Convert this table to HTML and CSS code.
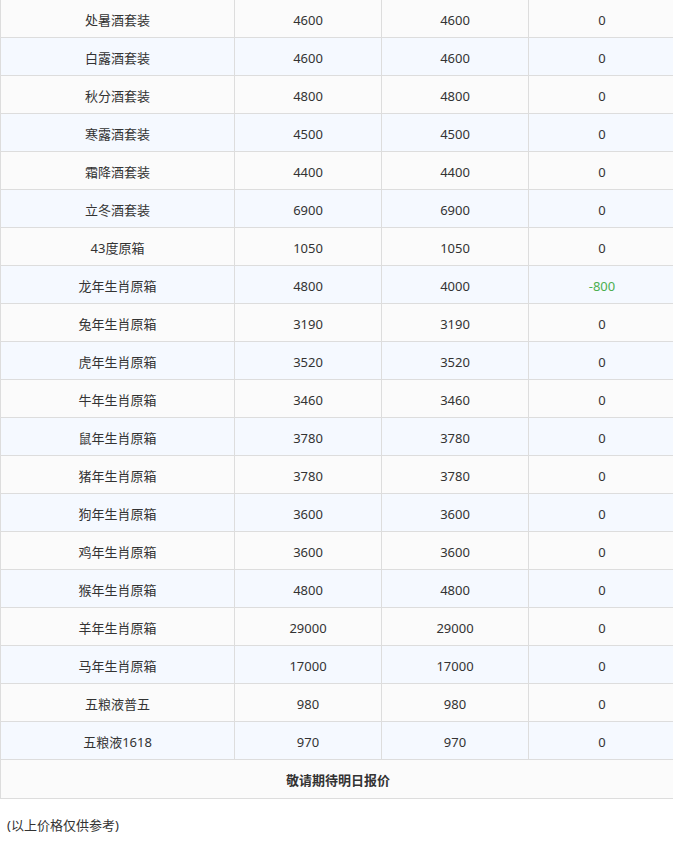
FILE: index.html
```html
<!DOCTYPE html>
<html>
<head>
<meta charset="utf-8">
<link rel="stylesheet" href="styles.css">
</head>
<body>
<div class="wrap">
<table class="price">
<colgroup><col class="c1"><col class="c2"><col class="c3"><col class="c4"></colgroup>
<tbody>
<tr><td>处暑酒套装</td><td>4600</td><td>4600</td><td>0</td></tr>
<tr><td>白露酒套装</td><td>4600</td><td>4600</td><td>0</td></tr>
<tr><td>秋分酒套装</td><td>4800</td><td>4800</td><td>0</td></tr>
<tr><td>寒露酒套装</td><td>4500</td><td>4500</td><td>0</td></tr>
<tr><td>霜降酒套装</td><td>4400</td><td>4400</td><td>0</td></tr>
<tr><td>立冬酒套装</td><td>6900</td><td>6900</td><td>0</td></tr>
<tr><td>43度原箱</td><td>1050</td><td>1050</td><td>0</td></tr>
<tr><td>龙年生肖原箱</td><td>4800</td><td>4000</td><td class="down">-800</td></tr>
<tr><td>兔年生肖原箱</td><td>3190</td><td>3190</td><td>0</td></tr>
<tr><td>虎年生肖原箱</td><td>3520</td><td>3520</td><td>0</td></tr>
<tr><td>牛年生肖原箱</td><td>3460</td><td>3460</td><td>0</td></tr>
<tr><td>鼠年生肖原箱</td><td>3780</td><td>3780</td><td>0</td></tr>
<tr><td>猪年生肖原箱</td><td>3780</td><td>3780</td><td>0</td></tr>
<tr><td>狗年生肖原箱</td><td>3600</td><td>3600</td><td>0</td></tr>
<tr><td>鸡年生肖原箱</td><td>3600</td><td>3600</td><td>0</td></tr>
<tr><td>猴年生肖原箱</td><td>4800</td><td>4800</td><td>0</td></tr>
<tr><td>羊年生肖原箱</td><td>29000</td><td>29000</td><td>0</td></tr>
<tr><td>马年生肖原箱</td><td>17000</td><td>17000</td><td>0</td></tr>
<tr><td>五粮液普五</td><td>980</td><td>980</td><td>0</td></tr>
<tr><td>五粮液1618</td><td>970</td><td>970</td><td>0</td></tr>
<tr class="foot"><td colspan="4">敬请期待明日报价</td></tr>
</tbody>
</table>
<p class="note">(以上价格仅供参考)</p>
</div>
</body>
</html>
```
FILE: styles.css
```css
html, body {
  margin: 0;
  padding: 0;
  overflow: hidden;
  background: #fff;
}
body {
  font-family: "Noto Sans", "Noto Sans CJK SC", sans-serif;
  font-size: 13px;
  color: #333;
}
.wrap {
  width: 675px;
}
.price {
  width: 675px;
  border-collapse: collapse;
  table-layout: fixed;
  margin-top: -1px;
}
.c1 { width: 234px; }
.c2 { width: 147px; }
.c3 { width: 147px; }
.c4 { width: 147px; }
.price td {
  border: 1px solid #ddd;
  height: 35px;
  padding: 2px 0 0;
  text-align: center;
  vertical-align: middle;
  background: #fbfbfb;
  line-height: 18px;
}
.price tr:nth-child(even) td {
  background: #f5f9ff;
}
.price td.down {
  color: #4caf50;
}
.price .foot td {
  font-weight: bold;
  background: #fbfbfb;
}
.price tr:last-child td {
  height: 36px;
}
.note {
  margin: 17px 0 0 7px;
  line-height: 18px;
}
```
